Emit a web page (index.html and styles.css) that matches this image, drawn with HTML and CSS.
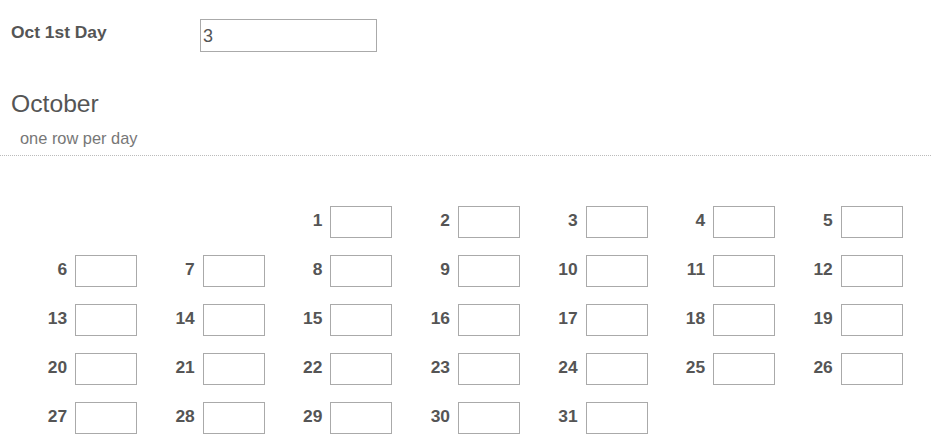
FILE: index.html
```html
<!DOCTYPE html>
<html>
<head>
<meta charset="utf-8">
<link rel="stylesheet" href="styles.css">
</head>
<body>
<div class="field-row">
  <label class="field-label">Oct 1st Day</label>
  <input class="field-input" type="text" value="3">
</div>
<h2 class="month-title">October</h2>
<div class="month-sub">one row per day</div>
<div class="divider"></div>
<div class="cal">
  <div class="cell empty"></div>
  <div class="cell empty"></div>
  <div class="cell"><span class="num">1</span><input class="day"></div>
  <div class="cell"><span class="num">2</span><input class="day"></div>
  <div class="cell"><span class="num">3</span><input class="day"></div>
  <div class="cell"><span class="num">4</span><input class="day"></div>
  <div class="cell"><span class="num">5</span><input class="day"></div>
  <div class="cell"><span class="num">6</span><input class="day"></div>
  <div class="cell"><span class="num">7</span><input class="day"></div>
  <div class="cell"><span class="num">8</span><input class="day"></div>
  <div class="cell"><span class="num">9</span><input class="day"></div>
  <div class="cell"><span class="num">10</span><input class="day"></div>
  <div class="cell"><span class="num">11</span><input class="day"></div>
  <div class="cell"><span class="num">12</span><input class="day"></div>
  <div class="cell"><span class="num">13</span><input class="day"></div>
  <div class="cell"><span class="num">14</span><input class="day"></div>
  <div class="cell"><span class="num">15</span><input class="day"></div>
  <div class="cell"><span class="num">16</span><input class="day"></div>
  <div class="cell"><span class="num">17</span><input class="day"></div>
  <div class="cell"><span class="num">18</span><input class="day"></div>
  <div class="cell"><span class="num">19</span><input class="day"></div>
  <div class="cell"><span class="num">20</span><input class="day"></div>
  <div class="cell"><span class="num">21</span><input class="day"></div>
  <div class="cell"><span class="num">22</span><input class="day"></div>
  <div class="cell"><span class="num">23</span><input class="day"></div>
  <div class="cell"><span class="num">24</span><input class="day"></div>
  <div class="cell"><span class="num">25</span><input class="day"></div>
  <div class="cell"><span class="num">26</span><input class="day"></div>
  <div class="cell"><span class="num">27</span><input class="day"></div>
  <div class="cell"><span class="num">28</span><input class="day"></div>
  <div class="cell"><span class="num">29</span><input class="day"></div>
  <div class="cell"><span class="num">30</span><input class="day"></div>
  <div class="cell"><span class="num">31</span><input class="day"></div>
</div>
</body>
</html>
```
FILE: styles.css
```css
html, body {
  margin: 0;
  padding: 0;
  background: #fff;
}
body {
  font-family: "Liberation Sans", Arial, sans-serif;
  color: #555;
}
.field-row {
  display: flex;
  align-items: flex-start;
  padding: 19px 0 0 11px;
}
.field-label {
  width: 189px;
  font-weight: bold;
  font-size: 17.4px;
  line-height: 20px;
  padding-top: 3px;
  color: #555;
}
.field-input {
  box-sizing: border-box;
  width: 177px;
  height: 33px;
  border: 1px solid #aaa;
  padding: 2px 2px 0;
  font-family: "Liberation Sans", Arial, sans-serif;
  font-size: 18px;
  color: #555;
  margin: 0;
  outline: none;
}
.month-title {
  margin: 37px 0 0 11px;
  font-weight: normal;
  font-size: 24.7px;
  line-height: 29px;
  color: #555;
}
.month-sub {
  margin: 11px 0 0 20px;
  font-size: 16.4px;
  line-height: 18px;
  color: #777;
}
.divider {
  margin-top: 8px;
  border-top: 1px dotted #bbb;
}
.cal {
  display: grid;
  grid-template-columns: repeat(7, 127.6px);
  row-gap: 17px;
  padding: 50px 0 0 9.6px;
}
.cell {
  display: flex;
  justify-content: flex-end;
  align-items: flex-start;
  gap: 8px;
}
.num {
  font-weight: bold;
  font-size: 17.4px;
  line-height: 20px;
  padding-top: 4px;
  color: #555;
}
.day {
  box-sizing: border-box;
  width: 62px;
  height: 32px;
  border: 1px solid #aaa;
  margin: 0;
  padding: 0;
  outline: none;
}
```
